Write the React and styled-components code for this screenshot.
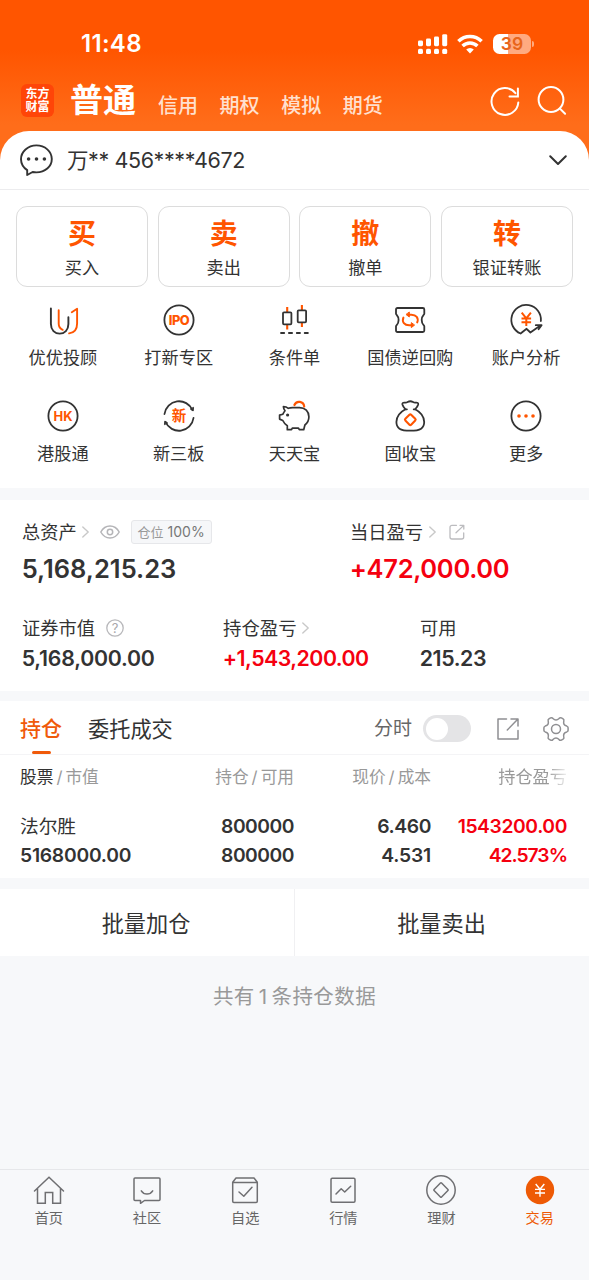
import React from "react";
import styled, { createGlobalStyle } from "styled-components";

const ORANGE = "#ff5500";
const INK = "#333333";
const RED = "#f5000f";

const GlobalStyle = createGlobalStyle`
  * { box-sizing: border-box; }
  html, body { margin: 0; padding: 0; }
  body {
    width: 589px;
    background: #f7f8fa;
    font-family: Inter, "Noto Sans CJK SC", sans-serif;
    color: ${INK};
  }
  svg { display: block; flex: none; overflow: visible; }
`;

const Screen = styled.div`
  width: 589px;
  height: 1280px;
  display: flex;
  flex-direction: column;
  overflow: hidden;
  background: #f7f8fa;
`;

const Text = styled.span`
  font-size: ${(p) => p.$size}px;
  line-height: ${(p) => p.$lh || p.$size + 4}px;
  font-weight: ${(p) => p.$weight || 400};
  color: ${(p) => p.$color || INK};
  letter-spacing: ${(p) => p.$ls || 0}px;
  white-space: nowrap;
`;

/* ---------- header ---------- */
const Header = styled.header`
  height: 131px;
  flex: none;
  display: flex;
  flex-direction: column;
`;
const Top = styled.div`
  background: linear-gradient(180deg, #ff5500 0, #ff5500 50px, #ff6d1a 125px, #ff6d1a 100%);
`;
const StatusBar = styled.div`
  height: 78px;
  padding: 9px 55px 0 81px;
  display: flex;
  align-items: center;
`;
const StatusIcons = styled.div`
  margin-left: auto;
  display: flex;
  align-items: center;
  gap: 10px;
`;
const Battery = styled.div`
  display: flex;
  align-items: center;
  gap: 1px;
`;
const BatteryBody = styled.div`
  width: 38px;
  height: 20px;
  border-radius: 6.5px;
  background: linear-gradient(90deg, #fff 0, #fff 15px, rgba(255, 255, 255, 0.5) 15px);
  color: #e8651a;
  font-size: 17.5px;
  font-weight: 600;
  line-height: 20px;
  text-align: center;
`;
const BatteryTip = styled.div`
  width: 2px;
  height: 6px;
  border-radius: 0 2px 2px 0;
  background: rgba(255, 255, 255, 0.5);
`;
const ModeBar = styled.nav`
  height: 45px;
  padding: 0 22px 0 21px;
  display: flex;
  align-items: center;
`;
const Logo = styled.div`
  width: 33px;
  height: 33px;
  border-radius: 6px;
  background: #ff4508;
  display: flex;
  flex-direction: column;
  align-items: center;
  justify-content: center;
  gap: 1px;
  margin-right: 16px;
`;
const ModeList = styled.div`
  display: flex;
  align-items: center;
  gap: 21.6px;
  margin-left: 22px;
  padding-top: 11px;
`;
const HeaderTools = styled.div`
  margin-left: auto;
  display: flex;
  gap: 17px;
`;

/* ---------- account ---------- */
const Sheet = styled.section`
  background: #fff;
  border-radius: 29px 29px 0 0;
`;
const AccountRow = styled.div`
  height: 59px;
  border-bottom: 1px solid #ececee;
  padding: 0 22px 0 20px;
  display: flex;
  align-items: center;
`;
const AccountName = styled(Text)`
  margin-left: 14px;
  margin-right: auto;
  padding-top: 2px;
`;

const TradeCards = styled.div`
  padding: 16px 16px 0;
  display: grid;
  grid-template-columns: repeat(4, 1fr);
  gap: 9.6px;
`;
const TradeCard = styled.div`
  height: 81px;
  border: 1px solid #dcdcdc;
  border-radius: 11px;
  display: flex;
  flex-direction: column;
  align-items: center;
  padding-top: 10px;
`;
const CardLabel = styled(Text)`
  margin-top: 7px;
`;

const ShortcutGrid = styled.div`
  padding: 15px 5px 0;
  height: 201px;
  display: grid;
  grid-template-columns: repeat(5, 1fr);
  grid-auto-rows: 96px;
`;
const Shortcut = styled.div`
  display: flex;
  flex-direction: column;
  align-items: center;
  gap: 9px;
`;

/* ---------- assets ---------- */
const Panel = styled.section`
  background: #fff;
  height: ${(p) => p.$h}px;
  flex: none;
  margin-top: ${(p) => p.$gap}px;
`;
const AssetRow = styled.div`
  display: grid;
  grid-template-columns: ${(p) => p.$cols};
  padding: ${(p) => p.$top}px 0 0 22px;
`;
const Metric = styled.div`
  display: flex;
  flex-direction: column;
`;
const MetricHead = styled.div`
  display: flex;
  align-items: center;
  height: 24px;
`;
const Gap = styled.span`
  width: ${(p) => p.$w}px;
`;
const Badge = styled.div`
  height: 24px;
  width: 81px;
  border: 1px solid #e6e7ea;
  border-radius: 3px;
  background: #f6f7f9;
  display: flex;
  align-items: center;
  justify-content: center;
  gap: 4px;
`;
const Amount = styled(Text)`
  margin-top: ${(p) => p.$mt}px;
  margin-left: -0.3px;
`;

/* ---------- holdings ---------- */
const Tabs = styled.div`
  height: 54px;
  border-bottom: 1px solid #f4f4f6;
  padding: 0 20px;
  display: flex;
`;
const Tab = styled.div`
  display: flex;
  flex-direction: column;
  align-items: center;
  padding-top: 14px;
  margin-right: 26px;
`;
const TabMark = styled.div`
  width: 19px;
  height: 4px;
  border-radius: 2px;
  background: #f05a0a;
  margin-top: 8px;
`;
const TabTools = styled.div`
  margin-left: auto;
  display: flex;
  align-items: center;
  padding-top: 2px;
`;
const Toggle = styled.div`
  width: 48px;
  height: 27px;
  border-radius: 14px;
  background: #e4e4e6;
  padding: 2.5px;
  margin: 0 26px 0 11px;
  &::before {
    content: "";
    display: block;
    width: 22px;
    height: 22px;
    border-radius: 50%;
    background: #fff;
  }
`;
const TableRow = styled.div`
  display: grid;
  grid-template-columns: 140px 134px 137px 136px;
  padding: ${(p) => p.$top}px 22px 0 20px;
`;
const Cell = styled.div`
  display: flex;
  flex-direction: column;
  align-items: ${(p) => (p.$left ? "flex-start" : "flex-end")};
`;
const Slash = styled.span`
  margin: 0 3px;
`;
const Faded = styled(Text)`
  mask-image: linear-gradient(90deg, #000 72%, rgba(0, 0, 0, 0.15) 100%);
`;

const BatchButtons = styled.section`
  margin-top: 11px;
  height: 67px;
  flex: none;
  background: #fff;
  display: grid;
  grid-template-columns: 294px 295px;
`;
const BatchButton = styled.div`
  display: flex;
  align-items: center;
  justify-content: center;
  padding: 3px 2px 0 0;
  & + & { box-shadow: inset 1px 0 0 #f0f0f2; padding-right: 0; }
`;
const Footnote = styled.div`
  flex: 1;
  padding-top: 29px;
  text-align: center;
`;
const Count = styled.span`
  margin: 0 4px;
`;

/* ---------- bottom navigation ---------- */
const BottomNav = styled.nav`
  height: 111px;
  flex: none;
  border-top: 1px solid #e6e7ea;
  display: grid;
  grid-template-columns: repeat(6, 1fr);
  background: #f7f8fa;
`;
const NavItem = styled.div`
  display: flex;
  flex-direction: column;
  align-items: center;
  padding: 5px 0.5px 0 0;
  gap: 2px;
`;

/* ---------- icons ---------- */
const Svg = ({ w, h = w, children, color = INK, sw = 1.6 }) => (
  <svg width={w} height={h} viewBox={`0 0 ${w} ${h}`} fill="none" stroke={color} strokeWidth={sw} strokeLinecap="round" strokeLinejoin="round">
    {children}
  </svg>
);

const Glyph = ({ x, y, size, children, weight = 700, fill = ORANGE, spacing = 0 }) => (
  <text x={x} y={y} fontSize={size} fontWeight={weight} fill={fill} stroke="none" textAnchor="middle" letterSpacing={spacing}>
    {children}
  </text>
);

const Signal = () => (
  <Svg w={29} h={20}>
    <g fill="#fff" stroke="none">
      {[0, 8, 16, 24.2].map((x, i) => (
        <g key={x}>
          <rect x={x} y="14.8" width="5" height="5.2" rx="1.6" />
          <rect x={x} y={[6.4, 4.6, 2.6, 0.2][i]} width="5" height={[5.8, 7.6, 9.6, 12][i]} rx="1.4" />
        </g>
      ))}
    </g>
  </Svg>
);

const Wifi = () => (
  <Svg w={26} h={20} color="#fff" sw={3.5}>
    <g strokeLinecap="butt">
      <path d="M1.4 7.3a16.6 16.6 0 0 1 23.2 0" />
      <path d="M5.6 11.9a10.6 10.6 0 0 1 14.8 0" />
    </g>
    <path d="M13 19.4l-3.8-3.8a5.4 5.4 0 0 1 7.6 0z" fill="#fff" stroke="none" />
  </Svg>
);

const Refresh = () => (
  <Svg w={30} color="#fff" sw={2}>
    <path d="M28.3 16.5A13.4 13.4 0 1 1 25.4 7.1" />
    <path d="M27.9 2.500v7.900h-8.400" strokeLinejoin="miter" />
  </Svg>
);

const Search = () => (
  <Svg w={30} color="#fff" sw={2}>
    <circle cx="14" cy="13.500" r="12.4" />
    <path d="M23.200 22.900l4.900 4.900" />
  </Svg>
);

const Chat = () => (
  <Svg w={33} h={32} sw={1.9}>
    <path d="M7.2 26.1A14.6 13.6 0 0 1 1 15.2C1 7.8 7.9 1.4 16.4 1.4s15.4 6 15.4 13.6-6.9 13.4-15.4 13.4c-1.4 0-2.6-.2-3.8-.4l-5.4 3z" />
    <g fill={INK} stroke="none">
      <circle cx="8.6" cy="15" r="1.8" />
      <circle cx="16.5" cy="15" r="1.8" />
      <circle cx="24.4" cy="15" r="1.8" />
    </g>
  </Svg>
);

const ChevronDown = () => (
  <Svg w={18} h={10} sw={2}>
    <path d="M1.2 1.2L9 9l7.8-7.8" />
  </Svg>
);

const ChevronRight = () => (
  <Svg w={7} h={12} color="#c8c8c8" sw={1.4}>
    <path d="M.8 1l5.4 5-5.4 5" />
  </Svg>
);

const Eye = () => (
  <Svg w={20} h={14} color="#b5b5b8" sw={1.5}>
    <path d="M.8 7C3 3 6.2 1 10 1s7 2 9.2 6c-2.2 4-5.4 6-9.2 6S3 11 .8 7z" />
    <circle cx="10" cy="7" r="2.7" />
  </Svg>
);

const ShareSmall = () => (
  <Svg w={16} color="#bcbcbf" sw={1.3}>
    <path d="M7.5 1.3H3A2 2 0 0 0 1 3.3v9.7a2 2 0 0 0 2 2h9.7a2 2 0 0 0 2-2V9" />
    <path d="M11 1.3h3.8v3.8M14.5 1.6L7 8.8" />
  </Svg>
);

const Help = () => (
  <Svg w={18} color="#b8b8bb" sw={1.3}>
    <circle cx="9" cy="9" r="8.2" />
    <Glyph x={9} y={13.6} size={13} weight={400} fill="#a8a8ab">?</Glyph>
  </Svg>
);

const ShareLarge = () => (
  <Svg w={22} color="#8f8f92" sw={1.5}>
    <path d="M9.5 1H1v20h20v-8.5" />
    <path d="M14 1h7v7M20.7 1.3L10.3 12" />
  </Svg>
);

const Gear = () => (
  <Svg w={26} color="#8f8f92" sw={1.5}>
    <path d="M7.6 1.9c1-.5 1.8-.2 2.4.6 1.8 2 4.2 2 6 0 .6-.8 1.4-1.1 2.4-.6l1.7 1c.8.5 1 1.3.7 2.2-.6 2.5.6 4.4 3 5 .9.3 1.3.8 1.3 1.7v2.4c0 .9-.4 1.4-1.3 1.7-2.4.6-3.6 2.5-3 5 .3.9.1 1.7-.7 2.2l-1.7 1c-1 .5-1.8.2-2.4-.6-1.8-2-4.2-2-6 0-.6.8-1.4 1.1-2.4.6l-1.7-1c-.8-.5-1-1.3-.7-2.2.6-2.5-.6-4.4-3-5-.9-.3-1.3-.8-1.3-1.7v-2.4c0-.9.4-1.4 1.3-1.7 2.4-.6 3.6-2.5 3-5-.3-.9-.1-1.7.7-2.2z" />
    <circle cx="13" cy="13" r="4.5" />
  </Svg>
);

const shortcutIcons = {
  advisor: (
    <Svg w={36} sw={1.9}>
      <path d="M5.9 6.4V22c0 6 3.9 9.6 8.8 9.6s8.7-3.6 8.7-9.6v-6.8" />
      <g stroke={ORANGE}>
        <path d="M13.7 8.2v13.6c0 2.700 1.400 4.900 4 6" />
        <path d="M26.8 10.2l5.300-3.400v14.700c0 6-3 9.300-8 9.900" />
      </g>
    </Svg>
  ),
  ipo: (
    <Svg w={36} sw={1.8}>
      <circle cx="18" cy="18" r="14.6" />
      <Glyph x={18} y={22.6} size={12.8} weight={800} spacing={-0.4}>IPO</Glyph>
    </Svg>
  ),
  condition: (
    <Svg w={36} sw={1.8}>
      <path d="M11.2 5v5M11.2 22.5v5M25.9 3v5M25.9 20v5" stroke={ORANGE} strokeWidth="2.1" strokeLinecap="butt" />
      <rect x="7" y="10.3" width="8.4" height="12" rx="1" />
      <rect x="21.7" y="8.3" width="8.4" height="12" rx="1" />
      <path d="M5 31h27.5" strokeDasharray="3.2 4.7" />
    </Svg>
  ),
  bond: (
    <Svg w={36} sw={1.8}>
      <path d="M5.5 6h25.3c1 0 1.5.6 1.5 1.5v4.2c0 1.2-2.6 1.6-2.6 6.3s2.6 5.1 2.6 6.3v4.2c0 .9-.5 1.5-1.5 1.500H5.500c-1 0-1.500-.6-1.500-1.500v-4.200c0-1.200 2.600-1.600 2.600-6.300S4 12.900 4 11.700V7.500C4 6.600 4.500 6 5.500 6z" />
      <g stroke={ORANGE} strokeWidth="2">
        <path d="M11.4 15.6c-1.7 4.4 1 7.7 5.800 7.700h2.500M25.200 20.400c1.700-4.400-1-7.700-5.800-7.700h-2.500" />
        <path d="M17.3 10.4v4.600l-3-2.300zM19.300 21v4.600l3-2.300z" fill={ORANGE} strokeWidth="1" />
      </g>
    </Svg>
  ),
  analysis: (
    <Svg w={36} sw={1.8}>
      <path d="M32.900 19A14.800 14.800 0 1 0 12.600 31.500l6-4.700 3.800 3.700 10.300-7.300M27.800 23.200h5.800l-3 4" />
      <path d="M13.700 10.700l4.600 5.600 4.600-5.600M18.300 16.300v7.800M13.500 16.500h9.600M13.500 20.200h9.600" stroke={ORANGE} strokeWidth="2" strokeLinecap="butt" />
    </Svg>
  ),
  hk: (
    <Svg w={36} sw={1.8}>
      <circle cx="18" cy="18" r="14.6" />
      <Glyph x={18} y={22.6} size={13} weight={700}>HK</Glyph>
    </Svg>
  ),
  neeq: (
    <Svg w={36} sw={1.8}>
      <path d="M3.500 16A14.700 14.700 0 0 1 31.500 12M32.500 20A14.700 14.700 0 0 1 4.500 24" />
      <path d="M29.600 11.200l2.500 1.800.4-3.300zM6.400 24.800l-2.500-1.800-.4 3.300z" fill={INK} strokeWidth="1" />
      <Glyph x={18} y={23.300} size={14.500}>新</Glyph>
    </Svg>
  ),
  piggy: (
    <Svg w={36} sw={1.7}>
      <path d="M12.300 10.300c-1.500-1.200-3-1.600-4.900-1.600.1 1.800.6 2.800 1.600 4-1 1.200-1.500 2.300-2.200 3.500l-3.200.9v4l3.200 1.400c1 2.200 2.400 3.900 4.500 5.200v4h4.200l.8-1.500h6.200l.8 1.500h4.400l1.200-4.700c2.600-2 4-4.800 4-8.200 0-5.300-3.800-9.200-9.400-9.200h-6.900c-1.700 0-3 .2-4.300.7z" />
      <circle cx="11.6" cy="17" r="1.6" fill={INK} stroke="none" />
      <path d="M18.400 7a5.100 5.100 0 0 1 9.800 1.500" stroke={ORANGE} strokeWidth="2.2" />
    </Svg>
  ),
  bag: (
    <Svg w={36} sw={1.8}>
      <path d="M13.400 11.300c-1.400-1.700-2.600-3.300-3-4.800-.3-1.500.8-2.200 2.500-1.900 1 .2 1.800 0 2.700-.6 1.600-.9 3.800-.9 5.400 0 .9.600 1.700.8 2.700.6 1.700-.3 2.800.4 2.500 1.900-.4 1.500-1.600 3.100-3 4.800 5.600 3 9 7.400 9 12.800 0 6-3.600 8.600-13.900 8.600S4.400 30.100 4.400 24.100c0-5.400 3.400-9.800 9-12.800z" />
      <path d="M13.400 11.300h1.500M23.200 11.300h-1.500" />
      <rect x="14.2" y="17.6" width="8.2" height="8.2" rx="1.2" transform="rotate(45 18.3 21.7)" stroke={ORANGE} strokeWidth="2.1" />
    </Svg>
  ),
  more: (
    <Svg w={36} sw={1.8}>
      <circle cx="18" cy="18" r="14.6" />
      <g fill={ORANGE} stroke="none">
        <circle cx="11" cy="18" r="1.8" />
        <circle cx="18" cy="18" r="1.8" />
        <circle cx="25" cy="18" r="1.8" />
      </g>
    </Svg>
  ),
};

const NAV = "#6f6f72";
const navIcons = {
  home: (
    <Svg w={32} color={NAV} sw={1.5}>
      <path d="M1.500 16L16 2.200 30.500 16M4.500 13.500v14.800h7.800V17.500h7.400v10.800h7.800V13.500" strokeLinejoin="miter" />
    </Svg>
  ),
  community: (
    <Svg w={32} color={NAV} sw={1.5}>
      <path d="M4 3h24c.6 0 1 .4 1 1v20.500c0 .6-.4 1-1 1H13.500l-4 2.800v-2.800H4c-.6 0-1-.4-1-1V4c0-.6.4-1 1-1z" />
      <path d="M10.300 15.800c2.600 4.200 8.800 4.200 11.400 0" />
    </Svg>
  ),
  watch: (
    <Svg w={32} color={NAV} sw={1.5}>
      <path d="M3.700 7.300L7 3h18l3.300 4.300v18.900c0 .7-.5 1.200-1.200 1.200H4.900c-.7 0-1.200-.5-1.200-1.200zM3.700 7.500h24.600" />
      <path d="M10 17l4.800 4.200 8.200-9" />
    </Svg>
  ),
  market: (
    <Svg w={32} color={NAV} sw={1.5}>
      <rect x="4" y="3.2" width="24" height="24" rx="1.2" />
      <path d="M9 19l5.200-5.200 3.500 3.200 6-5.800" />
    </Svg>
  ),
  wealth: (
    <Svg w={32} color={NAV} sw={1.5}>
      <circle cx="16" cy="15" r="14.2" />
      <rect x="10.7" y="9.7" width="10.6" height="10.6" rx=".8" transform="rotate(45 16 15)" />
    </Svg>
  ),
  trade: (
    <Svg w={32} color="#fff" sw={1.4}>
      <circle cx="16" cy="15" r="14.2" fill="#ee5a05" stroke="none" />
      <path d="M11.700 9l4.300 5.200L20.300 9M16 14.200v7.600M11 14.400h10M11 18h10" strokeLinecap="butt" />
    </Svg>
  ),
};

/* ---------- data ---------- */
const MODES = ["信用", "期权", "模拟", "期货"];
const CARDS = [["买", "买入"], ["卖", "卖出"], ["撤", "撤单"], ["转", "银证转账"]];
const SHORTCUTS = [
  ["advisor", "优优投顾"], ["ipo", "打新专区"], ["condition", "条件单"], ["bond", "国债逆回购"], ["analysis", "账户分析"],
  ["hk", "港股通"], ["neeq", "新三板"], ["piggy", "天天宝"], ["bag", "固收宝"], ["more", "更多"],
];
const NAV_ITEMS = [
  ["home", "首页"], ["community", "社区"], ["watch", "自选"], ["market", "行情"], ["wealth", "理财"], ["trade", "交易"],
];
const HOLDING = [
  { values: ["800000", "800000"], spacing: [-0.5, -0.5] },
  { values: ["6.460", "4.531"], spacing: [-0.4, -0.2] },
  { values: ["1543200.00", "42.573%"], spacing: [-0.4, -1], color: RED },
];

export default function App() {
  return (
    <>
      <GlobalStyle />
      <Screen>
        <Top>
          <Header>
            <StatusBar>
              <Text $size={24} $weight={600} $ls={0.3} $color="#fff">11:48</Text>
              <StatusIcons>
                <Signal />
                <Wifi />
                <Battery>
                  <BatteryBody>39</BatteryBody>
                  <BatteryTip />
                </Battery>
              </StatusIcons>
            </StatusBar>
            <ModeBar>
              <Logo>
                <Text $size={12} $lh={12.5} $weight={700} $color="#fff">东方</Text>
                <Text $size={12} $lh={12.5} $weight={700} $color="#fff">财富</Text>
              </Logo>
              <Text $size={33} $weight={700} $color="#fff">普通</Text>
              <ModeList>
                {MODES.map((m) => (
                  <Text key={m} $size={20} $weight={500} $color="#ffe0cf">{m}</Text>
                ))}
              </ModeList>
              <HeaderTools>
                <Refresh />
                <Search />
              </HeaderTools>
            </ModeBar>
          </Header>
          <Sheet>
            <AccountRow>
              <Chat />
              <AccountName $size={21.5} $ls={-0.4}>万** 456****4672</AccountName>
              <ChevronDown />
            </AccountRow>
            <TradeCards>
              {CARDS.map(([mark, label]) => (
                <TradeCard key={mark}>
                  <Text $size={28} $weight={700} $lh={34} $color={ORANGE}>{mark}</Text>
                  <CardLabel $size={17.2} $lh={20}>{label}</CardLabel>
                </TradeCard>
              ))}
            </TradeCards>
            <ShortcutGrid>
              {SHORTCUTS.map(([icon, label]) => (
                <Shortcut key={icon}>
                  {shortcutIcons[icon]}
                  <Text $size={17.2} $lh={22}>{label}</Text>
                </Shortcut>
              ))}
            </ShortcutGrid>
          </Sheet>
        </Top>

        <Panel $h={191} $gap={12}>
          <AssetRow $cols="328px 1fr" $top={20}>
            <Metric>
              <MetricHead>
                <Text $size={18.2}>总资产</Text>
                <Gap $w={5} /><ChevronRight /><Gap $w={11} /><Eye /><Gap $w={11} />
                <Badge>
                  <Text $size={13} $color="#999">仓位</Text>
                  <Text $size={14} $color="#777">100%</Text>
                </Badge>
              </MetricHead>
              <Amount $size={25.5} $weight={600} $lh={30} $mt={10}>5,168,215.23</Amount>
            </Metric>
            <Metric>
              <MetricHead>
                <Text $size={18.3}>当日盈亏</Text>
                <Gap $w={6} /><ChevronRight /><Gap $w={12.5} /><ShareSmall />
              </MetricHead>
              <Amount $size={25.5} $weight={600} $lh={30} $mt={10} $ls={-0.3} $color={RED}>+472,000.00</Amount>
            </Metric>
          </AssetRow>
          <AssetRow $cols="201px 197px 1fr" $top={32}>
            <Metric>
              <MetricHead>
                <Text $size={18.3}>证券市值</Text>
                <Gap $w={11} /><Help />
              </MetricHead>
              <Amount $size={21.3} $weight={600} $lh={26} $mt={5} $ls={-0.22}>5,168,000.00</Amount>
            </Metric>
            <Metric>
              <MetricHead>
                <Text $size={18.4}>持仓盈亏</Text>
                <Gap $w={5.5} /><ChevronRight />
              </MetricHead>
              <Amount $size={21.3} $weight={600} $lh={26} $mt={5} $ls={-0.5} $color={RED}>+1,543,200.00</Amount>
            </Metric>
            <Metric>
              <MetricHead><Text $size={18.3}>可用</Text></MetricHead>
              <Amount $size={21.3} $weight={600} $lh={26} $mt={5} $ls={-0.4}>215.23</Amount>
            </Metric>
          </AssetRow>
        </Panel>

        <Panel $h={177} $gap={10}>
          <Tabs>
            <Tab>
              <Text $size={21} $weight={500} $lh={28} $color="#f05a0a">持仓</Text>
              <TabMark />
            </Tab>
            <Tab>
              <Text $size={21.2} $lh={28}>委托成交</Text>
            </Tab>
            <TabTools>
              <Text $size={19} $color="#666">分时</Text>
              <Toggle />
              <ShareLarge />
              <Gap $w={24} />
              <Gear />
            </TabTools>
          </Tabs>
          <TableRow $top={12}>
            <Cell $left>
              <Text $size={16.7} $color="#999"><Text $size={16.7}>股票</Text><Slash>/</Slash>市值</Text>
            </Cell>
            <Cell><Text $size={16.7} $color="#999">持仓<Slash>/</Slash>可用</Text></Cell>
            <Cell><Text $size={16.7} $color="#999">现价<Slash>/</Slash>成本</Text></Cell>
            <Cell><Faded $size={17.2} $lh={20} $color="#999">持仓盈亏</Faded></Cell>
          </TableRow>
          <TableRow $top={24}>
            <Cell $left>
              <Text $size={18.7} $lh={29}>法尔胜</Text>
              <Text $size={19.3} $lh={29} $weight={600} $ls={-0.25}>5168000.00</Text>
            </Cell>
            {HOLDING.map(({ values, spacing, color }) => (
              <Cell key={values[0]}>
                {values.map((v, i) => (
                  <Text key={i} $size={19.3} $lh={29} $weight={600} $ls={spacing[i]} $color={color}>{v}</Text>
                ))}
              </Cell>
            ))}
          </TableRow>
        </Panel>

        <BatchButtons>
          <BatchButton><Text $size={22.2}>批量加仓</Text></BatchButton>
          <BatchButton><Text $size={22.2}>批量卖出</Text></BatchButton>
        </BatchButtons>
        <Footnote>
          <Text $size={20.5} $ls={0.4} $color="#999">共有<Count>1</Count>条持仓数据</Text>
        </Footnote>

        <BottomNav>
          {NAV_ITEMS.map(([icon, label]) => (
            <NavItem key={icon}>
              {navIcons[icon]}
              <Text $size={14.2} $lh={18} $color={icon === "trade" ? "#ee5a05" : "#666"}>{label}</Text>
            </NavItem>
          ))}
        </BottomNav>
      </Screen>
    </>
  );
}
